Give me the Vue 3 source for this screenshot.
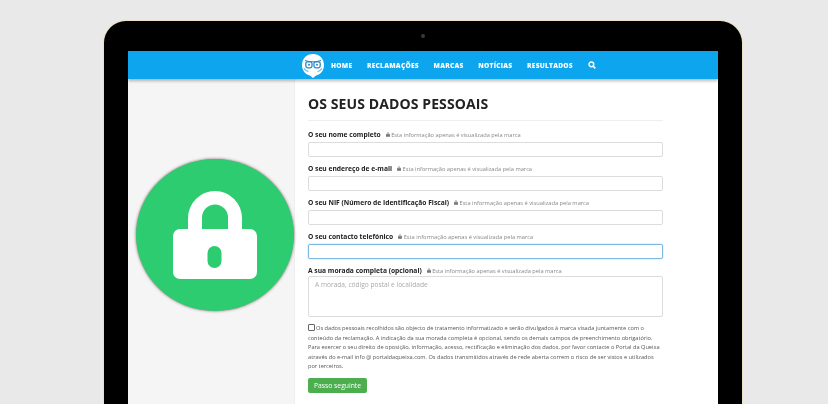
<script setup>
const links = ['HOME', 'RECLAMAÇÕES', 'MARCAS', 'NOTÍCIAS', 'RESULTADOS']
const hint = 'Esta informação apenas é visualizada pela marca'
const fields = [
  { label: 'O seu nome completo' },
  { label: 'O seu endereço de e-mail' },
  { label: 'O seu NIF (Número de Identificação Fiscal)' },
  { label: 'O seu contacto telefónico', focus: true },
]
</script>

<template>
  <div class="page">
    <div class="laptop">
      <div class="camera-row"><span class="camera"></span></div>
      <div class="screen">
        <nav class="nav">
          <svg class="logo" viewBox="0 0 24 26" width="24" height="26">
            <path d="M12 1C5.600 1 1 5.600 1 12c0 5.400 3.400 9.600 8 10.600L12 25l3-2.400c4.600-1 8-5.200 8-10.600C23 5.600 18.400 1 12 1z" fill="#fff"/>
            <path d="M4 7.500c2.500.8 5.200 1.200 8 1.200s5.500-.4 8-1.200" fill="none" stroke="#2a86c8" stroke-width="1.100"/>
            <rect x="4.800" y="8.800" width="6.200" height="6" rx="1.800" fill="none" stroke="#2a86c8" stroke-width="1.300"/>
            <rect x="13" y="8.800" width="6.200" height="6" rx="1.800" fill="none" stroke="#2a86c8" stroke-width="1.300"/>
            <circle cx="8" cy="11.800" r="1" fill="#2a86c8"/>
            <circle cx="16" cy="11.800" r="1" fill="#2a86c8"/>
            <path d="M3 15.500c1.500 1.800 2.500 2.600 4.500 3.300M21 15.500c-1.500 1.800-2.500 2.600-4.500 3.300" fill="none" stroke="#6cc3f2" stroke-width="1.200"/>
          </svg>
          <a v-for="l in links" :key="l" class="link">{{ l }}</a>
          <svg class="search" viewBox="0 0 10 10" width="8" height="8">
            <circle cx="4.200" cy="4.200" r="3" fill="none" stroke="#fff" stroke-width="1.700"/>
            <path d="M6.500 6.500 9.200 9.200" stroke="#fff" stroke-width="2"/>
          </svg>
        </nav>
        <div class="body">
          <aside class="side">
            <div class="badge">
              <svg viewBox="0 0 84 90" width="84" height="90">
                <path d="M15 40V28A27 27 0 0 1 69 28V40H55V27.500A12.500 12.500 0 0 0 29 27.500V40Z" fill="#fff"/>
                <rect x="0" y="39" width="84" height="50" rx="7" fill="#fff"/>
                <rect x="34.500" y="56" width="14" height="22" rx="7" fill="#2ecc71"/>
              </svg>
            </div>
          </aside>
          <main class="main">
            <h1 class="title">OS SEUS DADOS PESSOAIS</h1>
            <div v-for="f in fields" :key="f.label" class="field">
              <div class="label-row">
                <span class="label">{{ f.label }}</span>
                <svg class="mini" viewBox="0 0 8 9" width="4" height="5"><path d="M1.500 4V3a2.500 2.500 0 0 1 5 0v1H8v5H0V4zm1.200 0h2.600V3a1.300 1.300 0 0 0-2.600 0z" fill="#777"/></svg>
                <span class="hint">{{ hint }}</span>
              </div>
              <div class="input" :class="{ focus: f.focus }"></div>
            </div>
            <div class="field">
              <div class="label-row">
                <span class="label">A sua morada completa (opcional)</span>
                <svg class="mini" viewBox="0 0 8 9" width="4" height="5"><path d="M1.500 4V3a2.500 2.500 0 0 1 5 0v1H8v5H0V4zm1.200 0h2.600V3a1.300 1.300 0 0 0-2.600 0z" fill="#777"/></svg>
                <span class="hint">{{ hint }}</span>
              </div>
              <div class="textarea">A morada, código postal e localidade</div>
            </div>
            <p class="terms"><span class="check"></span>Os dados pessoais recolhidos são objecto de tratamento informatizado e serão divulgados à marca visada juntamente com o conteúdo da reclamação. A indicação da sua morada completa é opcional, sendo os demais campos de preenchimento obrigatório. Para exercer o seu direito de oposição, informação, acesso, rectificação e eliminação dos dados, por favor contacte o Portal da Queixa através do e-mail info @ portaldaqueixa.com. Os dados transmitidos através de rede aberta correm o risco de ser vistos e utilizados por terceiros.</p>
            <button class="btn">Passo seguinte</button>
          </main>
        </div>
      </div>
    </div>
  </div>
</template>

<style>
html, body { margin: 0; background: #e9e9e9; }
</style>

<style scoped>
.page {
  width: 828px;
  height: 404px;
  overflow: hidden;
  background: #e9e9e9;
  padding: 21px 0 0 104px;
  box-sizing: border-box;
  font-family: "Open Sans", sans-serif;
}
.laptop {
  width: 638px;
  height: 420px;
  background: #000;
  border-radius: 22px 22px 0 0;
  box-shadow: 0 0 0 1px #eedfc8;
  padding: 0 24px;
  box-sizing: border-box;
}
.camera-row { height: 30px; display: flex; justify-content: center; align-items: center; box-sizing: border-box; }
.camera { width: 4px; height: 4px; border-radius: 50%; background: #3a3a3a; }
.screen { background: #fff; height: 400px; filter: blur(.3px); }
.nav {
  height: 28px;
  background: #0ea5ef;
  display: flex;
  align-items: center;
  padding-left: 173px;
  box-shadow: 0 2px 3px rgba(0,0,0,.28);
  position: relative;
}
.logo { margin-right: 6px; margin-top: 1px; }
.link { color: #fff; font-size: 6.600px; font-weight: 800; letter-spacing: .25px; margin-right: 14.700px; white-space: nowrap; }
.body { display: flex; height: 372px; }
.side { width: 166px; background: #f5f5f5; border-right: 1px solid #eee; flex: none; }
.badge {
  width: 158px; height: 152px; margin: 80px 0 0 8px; border-radius: 50%;
  background: #2ecc71;
  box-shadow: 0 0 3px rgba(80,30,40,.7);
  display: flex; align-items: center; justify-content: center;
}
.main { width: 355px; padding: 0 0 0 13px; flex: none; }
.title {
  margin: 0; padding: 15px 0 7px; font-size: 14px; line-height: 19px; font-weight: 700; color: #222;
  border-bottom: 1px solid #eee; letter-spacing: .1px;
  width: 355px;
}
.label-row { height: 11px; display: flex; align-items: center; white-space: nowrap; margin-top: 6px; }
.field:first-of-type .label-row { margin-top: 8px; }
.label { font-size: 6.700px; font-weight: 700; color: #222; margin-right: 5px; }
.mini { margin-right: 1.500px; }
.hint { font-size: 5.700px; color: #888; }
.input {
  height: 15px; margin-top: 2px; box-sizing: border-box; width: 355px;
  border: 1px solid #dcdcdc; border-radius: 2px; background: #fff;
}
.input.focus { border-color: #7fb8e2; box-shadow: 0 0 2px rgba(102,175,233,.6); }
.textarea {
  height: 41px; box-sizing: border-box; width: 355px;
  border: 1px solid #dcdcdc; border-radius: 2px; padding: 2px 6px;
  font-size: 6.600px; line-height: 12px; color: #aaa; background: #fff;
}
.terms { margin: 7px 0 0; width: 355px; font-size: 5.650px; line-height: 9.500px; color: #555; }
.check { display: inline-block; width: 5px; height: 5px; border: 1px solid #666; border-radius: 1px; margin-right: 1px; vertical-align: -1px; }
.btn {
  display: block; margin-top: 6.500px; width: 59px; height: 15px; padding: 0; border: 0; border-radius: 2px;
  background: #4cae4f; color: #fff; font: 6.800px "Open Sans", sans-serif;
}
</style>
